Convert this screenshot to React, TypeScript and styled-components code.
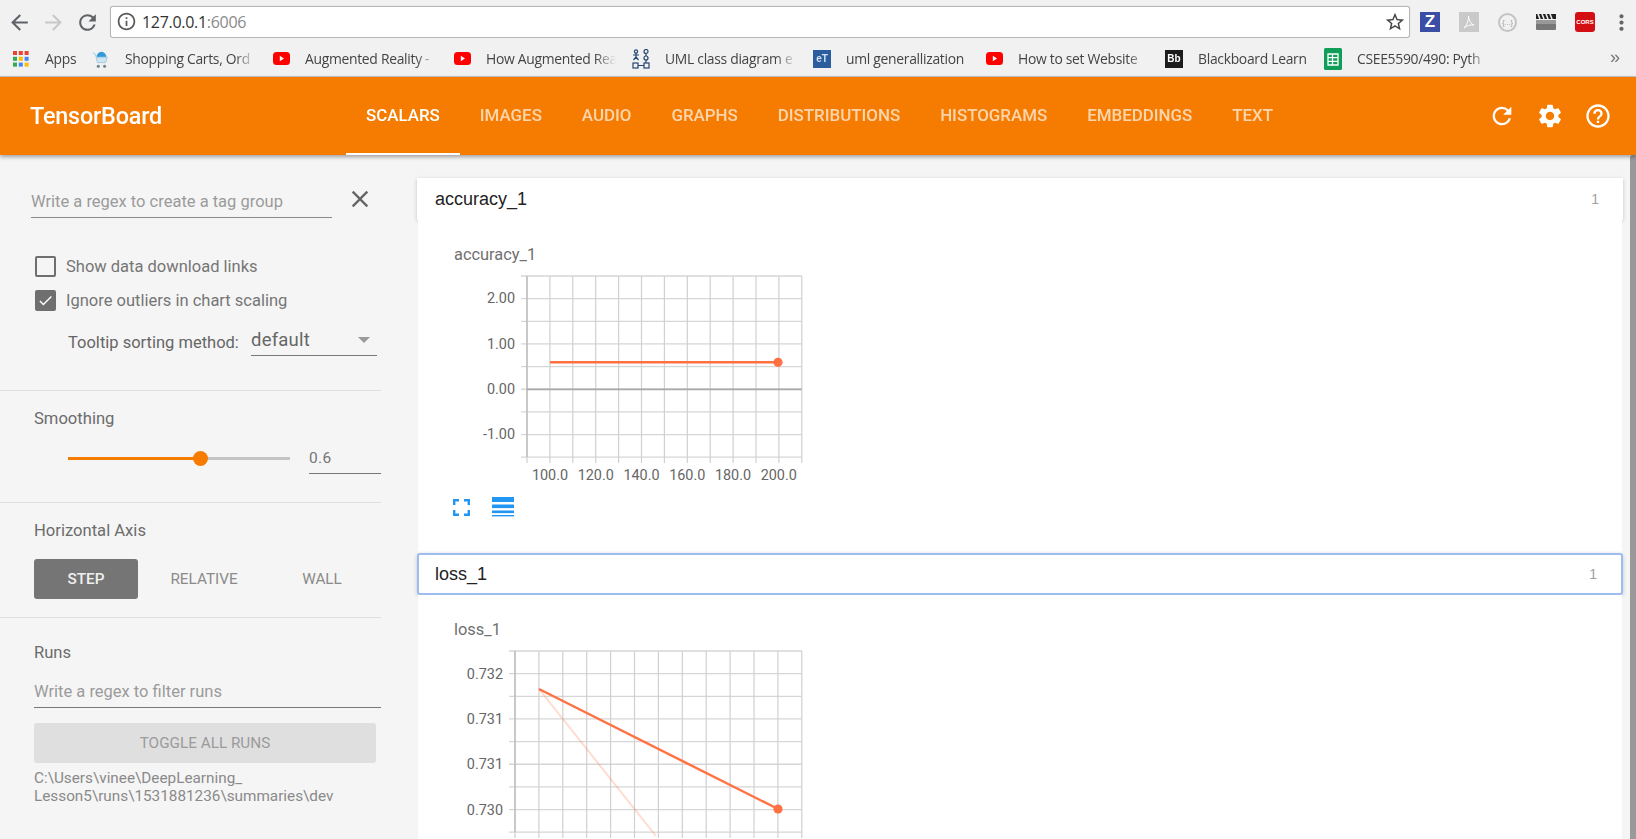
import React from 'react';
import styled, { createGlobalStyle } from 'styled-components';
import {
  MdArrowBack,
  MdArrowForward,
  MdCheck,
  MdClose,
  MdHelpOutline,
  MdInfoOutline,
  MdMoreVert,
  MdRefresh,
  MdSettings,
  MdStarBorder,
} from 'react-icons/md';

const GlobalStyle = createGlobalStyle`
  html, body {
    margin: 0;
    height: 839px;
    overflow: hidden;
    background: #f5f5f5;
    font-family: Roboto, "Liberation Sans", sans-serif;
  }
  * { box-sizing: border-box; }
`;

const Page = styled.div`
  width: 1636px;
  height: 839px;
  display: flex;
  flex-direction: column;
  overflow: hidden;
  filter: blur(0.4px);
`;

// Browser chrome
const BrowserBar = styled.div`
  height: 38px;
  flex: none;
  display: flex;
  align-items: center;
  background: #f1f1f1;
  padding-top: 6px;
`;

const NavButton = styled.div<{ $disabled?: boolean }>`
  width: 35px;
  display: flex;
  justify-content: center;
  color: ${props => (props.$disabled ? '#c8c8c8' : '#5f6368')};
  font-size: 25px;
`;

const NavButtons = styled.div`
  width: 105px;
  padding-left: 2px;
  display: flex;
  align-items: center;
`;

const AddressBar = styled.div`
  width: 1300px;
  height: 32px;
  margin-top: -1px;
  margin-left: 5px;
  background: #fff;
  border: 1px solid #b5b5b5;
  border-radius: 3px;
  display: flex;
  align-items: center;
  padding: 0 3px 0 5px;
  box-shadow: 0 0 1px #bbb;
`;

const InfoIcon = styled(MdInfoOutline)`
  font-size: 21px;
  color: #5a5a5a;
`;

const Url = styled.div`
  margin-left: 5px;
  font: 16px "Open Sans", "Noto Sans", sans-serif;
  letter-spacing: -0.3px;
  color: #333;
  flex: 1;
`;

const UrlPort = styled.span`
  color: #8a8a8a;
`;

const StarIcon = styled(MdStarBorder)`
  font-size: 22px;
  color: #444;
`;

const Extensions = styled.div`
  display: flex;
  align-items: center;
  margin-left: 10px;
  gap: 19px;
`;

const ExtBox = styled.div<{ $bg: string }>`
  width: 20px;
  height: 20px;
  display: flex;
  align-items: center;
  justify-content: center;
  background: ${props => props.$bg};
  color: #fff;
  overflow: hidden;
`;

const ExtZ = styled(ExtBox)`
  font: bold 17px "Liberation Sans", sans-serif;
`;

const ExtCors = styled(ExtBox)`
  border-radius: 3px;
  font: bold 6px "Liberation Sans", sans-serif;
`;

const ExtCircle = styled.div`
  width: 19px;
  height: 19px;
  border-radius: 50%;
  border: 2px solid #c4c4c4;
  display: flex;
  align-items: center;
  justify-content: center;
  font: 7px "Liberation Sans", sans-serif;
  color: #999;
`;

const MoreIcon = styled(MdMoreVert)`
  font-size: 25px;
  color: #666;
  margin-left: -5px;
`;

const BookmarkBar = styled.div`
  height: 39px;
  flex: none;
  display: flex;
  align-items: center;
  gap: 16px;
  padding: 3px 0 0 12px;
  background: #f1f1f1;
  border-bottom: 1px solid #c4c4c4;
  position: relative;
`;

const Bookmark = styled.div`
  display: flex;
  align-items: center;
  gap: 15px;
`;

const FavIcon = styled.div`
  width: 18px;
  height: 20px;
  flex: none;
  display: flex;
  align-items: center;
  justify-content: center;
`;

const BookmarkLabel = styled.div<{ $width: number; $fade?: boolean }>`
  width: ${props => props.$width}px;
  white-space: nowrap;
  font: 13.9px "Open Sans", "Noto Sans", sans-serif;
  letter-spacing: -0.3px;
  color: #444;
  ${props => props.$fade && 'mask-image: linear-gradient(to right, #000 84%, transparent 100%);'}
`;

const TextFav = styled.div<{ $bg: string; $color: string }>`
  width: 18px;
  height: 18px;
  display: flex;
  align-items: center;
  justify-content: center;
  font: bold 10px "Liberation Sans", sans-serif;
  background: ${props => props.$bg};
  color: ${props => props.$color};
`;

const Overflow = styled.div`
  position: absolute;
  right: 16px;
  top: 9px;
  font: 18px "Liberation Sans", sans-serif;
  color: #777;
`;

// TensorBoard header
const Header = styled.header`
  height: 78px;
  flex: none;
  background: #f57c00;
  display: flex;
  align-items: stretch;
  color: #fff;
  box-shadow: 0 2px 4px rgba(0, 0, 0, 0.35);
  position: relative;
  z-index: 2;
`;

const Title = styled.div`
  width: 346px;
  padding-left: 30px;
  display: flex;
  align-items: center;
  font-size: 23.4px;
  font-weight: 500;
  letter-spacing: -0.2px;
`;

const Tabs = styled.nav`
  display: flex;
  flex: 1;
`;

const Tab = styled.div<{ $active?: boolean }>`
  padding: 0 20px;
  display: flex;
  align-items: center;
  font-size: 16.9px;
  font-weight: 500;
  color: ${props => (props.$active ? '#fff' : 'rgba(255, 255, 255, 0.68)')};
  border-bottom: 2px solid ${props => (props.$active ? '#fff' : 'transparent')};
`;

const HeaderIcons = styled.div`
  display: flex;
  align-items: center;
  gap: 20px;
  padding-right: 24px;
  font-size: 28px;
`;

// Page body
const Body = styled.div`
  flex: 1;
  display: flex;
  min-height: 0;
  background: #f5f5f5;
`;

const Sidebar = styled.aside`
  width: 382px;
  flex: none;
  padding-right: 1px;
  color: #666;
`;

const Section = styled.section<{ $height: number }>`
  height: ${props => props.$height}px;
  padding-left: 34px;
  border-bottom: 1px solid #dfdfdf;
`;

const LastSection = styled(Section)`
  border-bottom: none;
`;

const SectionTitle = styled.div<{ $top: number }>`
  padding-top: ${props => props.$top}px;
  font-size: 16.6px;
  line-height: 20px;
  color: #6c6c6c;
`;

const TagRow = styled.div`
  display: flex;
  align-items: center;
  padding-top: 24px;
  margin-left: -3px;
`;

const RegexInput = styled.input<{ $width: number }>`
  width: ${props => props.$width}px;
  height: 39px;
  padding: 6px 0 0;
  border: none;
  border-bottom: 1px solid #8a8a8a;
  background: transparent;
  outline: none;
  font: 16.5px Roboto, sans-serif;
  &::placeholder {
    color: #9b9b9b;
    opacity: 1;
  }
`;

const CloseIcon = styled(MdClose)`
  font-size: 28px;
  color: #666;
  margin-left: 14px;
`;

const CheckRow = styled.div<{ $top: number }>`
  display: flex;
  align-items: center;
  gap: 10px;
  margin-top: ${props => props.$top}px;
  margin-left: 1px;
  font-size: 16.5px;
  color: #757575;
  height: 21px;
`;

const CheckBox = styled.div<{ $checked?: boolean }>`
  width: 21px;
  height: 21px;
  border: 2px solid #6f6f6f;
  border-radius: 2px;
  display: flex;
  align-items: center;
  justify-content: center;
  color: #fff;
  font-size: 21px;
  background: ${props => (props.$checked ? '#6f6f6f' : 'transparent')};
`;

const SortRow = styled.div`
  display: flex;
  align-items: flex-end;
  margin: 7px 0 0 34px;
  height: 38px;
`;

const SortLabel = styled.div`
  width: 183px;
  font-size: 16.5px;
  color: #666;
  padding-bottom: 4px;
`;

const SortSelect = styled.div`
  width: 126px;
  height: 38px;
  border-bottom: 1px solid #777;
  display: flex;
  align-items: center;
  justify-content: space-between;
  padding: 6px 7px 0 0;
  font-size: 18.5px;
  color: #666;
  letter-spacing: 0.2px;
`;

const Caret = styled.div`
  width: 0;
  height: 0;
  border-left: 6px solid transparent;
  border-right: 6px solid transparent;
  border-top: 6px solid #9a9a9a;
`;

const SliderRow = styled.div`
  display: flex;
  align-items: flex-end;
  margin-top: 13px;
  padding-left: 34px;
`;

const SliderTrack = styled.div`
  width: 222px;
  height: 3px;
  background: #c4c4c4;
  margin-bottom: 14px;
  position: relative;
`;

const SliderFill = styled.div`
  height: 3px;
  background: #f57c00;
  position: relative;
`;

const SliderThumb = styled.div`
  position: absolute;
  right: -7px;
  top: -6px;
  width: 15px;
  height: 15px;
  border-radius: 50%;
  background: #f57c00;
`;

const SmoothValue = styled.div`
  width: 72px;
  margin-left: 19px;
  height: 32px;
  border-bottom: 1px solid #777;
  font-size: 15.5px;
  line-height: 32px;
  color: #757575;
  letter-spacing: 0.3px;
`;

const AxisButtons = styled.div`
  display: flex;
  gap: 14px;
  margin-top: 18px;
`;

const AxisButton = styled.div<{ $active?: boolean }>`
  width: 104px;
  height: 40px;
  border-radius: 3px;
  display: flex;
  align-items: center;
  justify-content: center;
  font-size: 15.3px;
  font-weight: ${props => (props.$active ? 500 : 400)};
  color: ${props => (props.$active ? '#f0f0f0' : '#8a8a8a')};
  background: ${props => (props.$active ? '#757575' : 'transparent')};
`;

const RunsFilter = styled.div`
  margin-top: 6px;
  & > input {
    border-bottom: 1px solid #777;
  }
`;

const ToggleButton = styled.div`
  width: 342px;
  height: 40px;
  margin-top: 15px;
  border-radius: 3px;
  background: #dfdfdf;
  display: flex;
  align-items: center;
  justify-content: center;
  font-size: 15.3px;
  color: #9b9b9b;
`;

const RunPath = styled.div`
  margin-top: 6px;
  font-size: 15.3px;
  line-height: 18px;
  color: #8a8a8a;
`;

const Content = styled.main`
  flex: 1;
  min-width: 0;
  padding: 23px 7px 0 35px;
  overflow: hidden;
`;

const Card = styled.div`
  display: flex;
  flex-direction: column;
`;

const CardHeader = styled.div<{ $focused?: boolean }>`
  height: 42px;
  flex: none;
  display: flex;
  align-items: center;
  justify-content: space-between;
  padding: 0 24px 0 ${props => (props.$focused ? '16px' : '18px')};
  background: #fff;
  box-shadow: 0 1px 4px rgba(0, 0, 0, 0.2);
  border-radius: ${props => (props.$focused ? '3px' : '0')};
  border: ${props => (props.$focused ? '2px solid #9dbdf0' : 'none')};
`;

const CardName = styled.div`
  font: 18px "Liberation Sans", sans-serif;
  color: #222;
`;

const CardCount = styled.div`
  font: 14px "Liberation Sans", sans-serif;
  color: #a0a0a0;
`;

const CardBody = styled.div<{ $height: number }>`
  height: ${props => props.$height}px;
  margin: 0 1px;
  background: #fff;
  padding-top: 25px;
`;

const ChartTitle = styled.div`
  padding-left: 36px;
  font-size: 16.4px;
  line-height: 20px;
  color: #707070;
`;

const ChartSvg = styled.svg`
  display: block;
  margin-top: 6px;
`;

const AxisText = styled.text`
  font: 14.4px Roboto, sans-serif;
  fill: #666;
`;

const ChartActions = styled.div`
  display: flex;
  align-items: center;
  gap: 22px;
  padding-left: 35px;
  margin-top: 10px;
`;

const ScrollBar = styled.div`
  width: 6px;
  flex: none;
  background: #999;
  border-radius: 3px 0 0 0;
`;

interface ChartProps {
  left: number;
  stepX: number;
  yLabels: { y: number; label: string }[];
  xLabels?: { x: number; label: string }[];
  height: number;
  zeroLine?: number;
  children: React.ReactNode;
}

const TOP = 5;
const BOTTOM = 186;
const COLUMNS = 12;

// plot area and labels, coordinates are relative to the svg
const Chart = ({ left, stepX, yLabels, xLabels, height, zeroLine, children }: ChartProps) => {
  const right = left + stepX * COLUMNS;
  const rows = Array.from({ length: 9 }, (_, i) => TOP + i * 22.65);
  const cols = Array.from({ length: COLUMNS + 1 }, (_, i) => left + i * stepX);
  return (
    <ChartSvg width={400} height={height}>
      {rows.map(y => (
        <line key={y} x1={left - 6} x2={right} y1={y} y2={y} stroke="#d6d6d6" strokeWidth={1.3} />
      ))}
      {cols.map(x => (
        <line key={x} x1={x} x2={x} y1={TOP} y2={BOTTOM + 6} stroke="#d0d0d0" strokeWidth={1.2} />
      ))}
      <line x1={left} x2={left} y1={TOP} y2={BOTTOM} stroke="#bcbcbc" strokeWidth={1.4} />
      {zeroLine !== undefined && (
        <line x1={left} x2={right} y1={zeroLine} y2={zeroLine} stroke="#a8a8a8" strokeWidth={1.6} />
      )}
      {yLabels.map(l => (
        <AxisText key={l.y} x={left - 12} y={l.y + 5} textAnchor="end">
          {l.label}
        </AxisText>
      ))}
      {xLabels &&
        xLabels.map(l => (
          <AxisText key={l.x} x={l.x} y={BOTTOM + 23} textAnchor="middle">
            {l.label}
          </AxisText>
        ))}
      {children}
    </ChartSvg>
  );
};

const YouTubeIcon = () => (
  <svg width="17" height="13" viewBox="0 0 17 13">
    <rect width="17" height="13" rx="3.5" fill="#f00" />
    <path d="M6.8 3.8 L11 6.5 L6.8 9.2 Z" fill="#fff" />
  </svg>
);

const AppsIcon = () => {
  const colors = ['#ea4335', '#ea4335', '#ea4335', '#34a853', '#fbbc05', '#4285f4', '#34a853', '#4285f4', '#fbbc05'];
  return (
    <svg width="16" height="16" viewBox="0 0 16 16">
      {colors.map((c, i) => (
        <rect key={i} x={(i % 3) * 5.8} y={Math.floor(i / 3) * 5.8} width="4" height="4" fill={c} />
      ))}
    </svg>
  );
};

const CartIcon = () => (
  <svg width="20" height="22" viewBox="0 0 20 22">
    <path d="M5 9 a5.5 6 0 0 1 11 0 Z" fill="#2f9bd8" />
    <path d="M1 4 L4 6 L6 15 H15 L17 9 H5" fill="#cfe6f2" stroke="#9cc6dc" strokeWidth="1" />
    <circle cx="7" cy="19" r="1.7" fill="#6d8290" />
    <circle cx="14" cy="19" r="1.7" fill="#6d8290" />
  </svg>
);

const UmlIcon = () => (
  <svg width="18" height="20" viewBox="0 0 18 20" fill="none" stroke="#24456f" strokeWidth="1.2">
    <circle cx="4" cy="2.5" r="1.6" />
    <path d="M4 4 V8 M1 6 H7 M4 8 L1.5 11 M4 8 L6.5 11" />
    <circle cx="14" cy="2.5" r="2" />
    <circle cx="14" cy="9" r="2" />
    <path d="M14 4.5 V7" />
    <rect x="1" y="14" width="5" height="5" />
    <rect x="12" y="14" width="5" height="5" />
    <path d="M6 16.5 H12 M14 11 V14" />
  </svg>
);

const SheetIcon = () => (
  <svg width="18" height="22" viewBox="0 0 18 22">
    <rect width="18" height="22" rx="1.5" fill="#0f9d58" />
    <path d="M4 6 H14 V17 H4 Z M4 9.7 H14 M4 13.3 H14 M8.5 6 V17" fill="none" stroke="#fff" strokeWidth="1.3" />
  </svg>
);

const PdfIcon = () => (
  <svg width="12" height="14" viewBox="0 0 12 14" fill="none" stroke="#fff" strokeWidth="1">
    <path d="M1 13 C4 10 6 5 5.5 1 C6 6 8 9 11 10 C7 9.5 4 10.5 1 13 Z" />
  </svg>
);

const ClapperIcon = () => (
  <svg width="20" height="20" viewBox="0 0 20 20">
    <rect y="2" width="20" height="5" fill="#222" />
    <path d="M2 2 L4 7 M6 2 L8 7 M10 2 L12 7 M14 2 L16 7" stroke="#eee" strokeWidth="1.6" />
    <rect y="8" width="20" height="10" rx="1" fill="#777" />
    <rect y="8" width="20" height="4" fill="#999" />
  </svg>
);

const FullscreenIcon = () => (
  <svg width="17" height="17" viewBox="0 0 17 17" fill="none" stroke="#2196f3" strokeWidth="2.4">
    <path d="M1.2 6 V1.2 H6 M11 1.2 H15.8 V6 M15.8 11 V15.8 H11 M6 15.8 H1.2 V11" />
  </svg>
);

const TableIcon = () => (
  <svg width="22" height="20" viewBox="0 0 22 20" fill="#2196f3">
    <rect width="22" height="5" />
    <rect y="7.5" width="22" height="3.6" />
    <rect y="13.5" width="22" height="2.6" />
    <rect y="18" width="22" height="1.4" />
  </svg>
);

const App = () => {
  const smoothing = 0.6;
  const accuracyX = [100, 120, 140, 160, 180, 200].map((v, i) => ({
    x: 132 + i * 45.75,
    label: `${v}.0`,
  }));

  return (
    <Page>
      <GlobalStyle />
      <BrowserBar>
        <NavButtons>
          <NavButton><MdArrowBack /></NavButton>
          <NavButton $disabled><MdArrowForward /></NavButton>
          <NavButton><MdRefresh /></NavButton>
        </NavButtons>
        <AddressBar>
          <InfoIcon />
          <Url>127.0.0.1<UrlPort>:6006</UrlPort></Url>
          <StarIcon />
        </AddressBar>
        <Extensions>
          <ExtZ $bg="#3b4ea6">Z</ExtZ>
          <ExtBox $bg="#c9c9c9"><PdfIcon /></ExtBox>
          <ExtCircle>{'{...}'}</ExtCircle>
          <ClapperIcon />
          <ExtCors $bg="#d30f14">CORS</ExtCors>
          <MoreIcon />
        </Extensions>
      </BrowserBar>

      <BookmarkBar>
        <Bookmark>
          <FavIcon><AppsIcon /></FavIcon>
          <BookmarkLabel $width={31}>Apps</BookmarkLabel>
        </Bookmark>
        <Bookmark>
          <FavIcon><CartIcon /></FavIcon>
          <BookmarkLabel $width={131} $fade>Shopping Carts, Ord</BookmarkLabel>
        </Bookmark>
        <Bookmark>
          <FavIcon><YouTubeIcon /></FavIcon>
          <BookmarkLabel $width={132} $fade>Augmented Reality -</BookmarkLabel>
        </Bookmark>
        <Bookmark>
          <FavIcon><YouTubeIcon /></FavIcon>
          <BookmarkLabel $width={130} $fade>How Augmented Rea</BookmarkLabel>
        </Bookmark>
        <Bookmark>
          <FavIcon><UmlIcon /></FavIcon>
          <BookmarkLabel $width={132} $fade>UML class diagram e</BookmarkLabel>
        </Bookmark>
        <Bookmark>
          <FavIcon><TextFav $bg="#2b5d9e" $color="#cfe0f2">eT</TextFav></FavIcon>
          <BookmarkLabel $width={123}>uml generallization</BookmarkLabel>
        </Bookmark>
        <Bookmark>
          <FavIcon><YouTubeIcon /></FavIcon>
          <BookmarkLabel $width={131} $fade>How to set Website</BookmarkLabel>
        </Bookmark>
        <Bookmark>
          <FavIcon><TextFav $bg="#1c1c1c" $color="#fff">Bb</TextFav></FavIcon>
          <BookmarkLabel $width={110}>Blackboard Learn</BookmarkLabel>
        </Bookmark>
        <Bookmark>
          <FavIcon><SheetIcon /></FavIcon>
          <BookmarkLabel $width={133} $fade>CSEE5590/490: Pyth</BookmarkLabel>
        </Bookmark>
        <Overflow>»</Overflow>
      </BookmarkBar>

      <Header>
        <Title>TensorBoard</Title>
        <Tabs>
          <Tab $active>SCALARS</Tab>
          <Tab>IMAGES</Tab>
          <Tab>AUDIO</Tab>
          <Tab>GRAPHS</Tab>
          <Tab>DISTRIBUTIONS</Tab>
          <Tab>HISTOGRAMS</Tab>
          <Tab>EMBEDDINGS</Tab>
          <Tab>TEXT</Tab>
        </Tabs>
        <HeaderIcons>
          <MdRefresh />
          <MdSettings />
          <MdHelpOutline />
        </HeaderIcons>
      </Header>

      <Body>
        <Sidebar>
          <Section $height={236}>
            <TagRow>
              <RegexInput $width={301} placeholder="Write a regex to create a tag group" />
              <CloseIcon />
            </TagRow>
            <CheckRow $top={38}>
              <CheckBox />
              Show data download links
            </CheckRow>
            <CheckRow $top={13}>
              <CheckBox $checked><MdCheck /></CheckBox>
              Ignore outliers in chart scaling
            </CheckRow>
            <SortRow>
              <SortLabel>Tooltip sorting method:</SortLabel>
              <SortSelect>
                default
                <Caret />
              </SortSelect>
            </SortRow>
          </Section>
          <Section $height={112}>
            <SectionTitle $top={18}>Smoothing</SectionTitle>
            <SliderRow>
              <SliderTrack>
                <SliderFill style={{ width: `${smoothing * 100}%` }}>
                  <SliderThumb />
                </SliderFill>
              </SliderTrack>
              <SmoothValue>0.6</SmoothValue>
            </SliderRow>
          </Section>
          <Section $height={115}>
            <SectionTitle $top={18}>Horizontal Axis</SectionTitle>
            <AxisButtons>
              <AxisButton $active>STEP</AxisButton>
              <AxisButton>RELATIVE</AxisButton>
              <AxisButton>WALL</AxisButton>
            </AxisButtons>
          </Section>
          <LastSection $height={222}>
            <SectionTitle $top={25}>Runs</SectionTitle>
            <RunsFilter>
              <RegexInput $width={347} placeholder="Write a regex to filter runs" />
            </RunsFilter>
            <ToggleButton>TOGGLE ALL RUNS</ToggleButton>
            <RunPath>
              C:\Users\vinee\DeepLearning_
              <br />
              Lesson5\runs\1531881236\summaries\dev
            </RunPath>
          </LastSection>
        </Sidebar>

        <Content>
          <Card>
            <CardHeader>
              <CardName>accuracy_1</CardName>
              <CardCount>1</CardCount>
            </CardHeader>
            <CardBody $height={333}>
              <ChartTitle>accuracy_1</ChartTitle>
              <Chart
                left={109}
                stepX={22.9}
                height={216}
                zeroLine={118.4}
                yLabels={[
                  { y: 27, label: '2.00' },
                  { y: 73, label: '1.00' },
                  { y: 118, label: '0.00' },
                  { y: 163, label: '-1.00' },
                ]}
                xLabels={accuracyX}
              >
                <line x1={132} x2={360} y1={91.3} y2={91.3} stroke="#ff7043" strokeWidth={2.4} />
                <circle cx={360} cy={91.3} r={4.6} fill="#ff7043" />
              </Chart>
              <ChartActions>
                <FullscreenIcon />
                <TableIcon />
              </ChartActions>
            </CardBody>
          </Card>
          <Card>
            <CardHeader $focused>
              <CardName>loss_1</CardName>
              <CardCount>1</CardCount>
            </CardHeader>
            <CardBody $height={300}>
              <ChartTitle>loss_1</ChartTitle>
              <Chart
                left={97}
                stepX={23.9}
                height={200}
                yLabels={[
                  { y: 28, label: '0.732' },
                  { y: 73, label: '0.731' },
                  { y: 118, label: '0.731' },
                  { y: 164, label: '0.730' },
                ]}
              >
                <line x1={121} x2={238} y1={43} y2={190} stroke="#ff7043" strokeOpacity={0.25} strokeWidth={2} />
                <line x1={121} x2={360} y1={43} y2={163} stroke="#ff7043" strokeWidth={2.4} />
                <circle cx={360} cy={163} r={4.6} fill="#ff7043" />
              </Chart>
            </CardBody>
          </Card>
        </Content>
        <ScrollBar />
      </Body>
    </Page>
  );
};

export default App;
